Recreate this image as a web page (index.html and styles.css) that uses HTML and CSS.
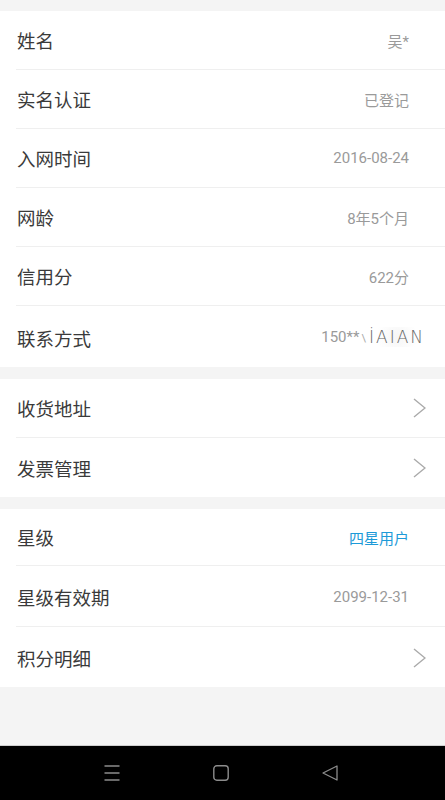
FILE: index.html
```html
<!DOCTYPE html>
<html lang="zh-CN">
<head>
  <meta charset="UTF-8" />
  <title>个人信息</title>
  <link rel="stylesheet" href="styles.css">
</head>
<body>

  <div class="page">
    <div class="group">
      <div class="row"><span class="label">姓名</span><span class="value">吴*</span></div>
      <div class="row"><span class="label">实名认证</span><span class="value">已登记</span></div>
      <div class="row"><span class="label">入网时间</span><span class="value">2016-08-24</span></div>
      <div class="row"><span class="label">网龄</span><span class="value">8年5个月</span></div>
      <div class="row"><span class="label">信用分</span><span class="value">622分</span></div>
      <div class="row row-contact">
        <span class="label">联系方式</span>
        <span class="value contact">150**<span class="slash">\</span><span class="mark">İAIAN</span></span>
      </div>
    </div>

    <div class="group">
      <div class="row row-link"><span class="label">收货地址</span><svg class="arrow" width="13" height="20" viewBox="0 0 13 20"><path d="M1 1L12 10L1 19" /></svg></div>
      <div class="row row-link"><span class="label">发票管理</span><svg class="arrow" width="13" height="20" viewBox="0 0 13 20"><path d="M1 1L12 10L1 19" /></svg></div>
    </div>

    <div class="group">
      <div class="row row-star"><span class="label">星级</span><span class="value blue">四星用户</span></div>
      <div class="row row-expire"><span class="label">星级有效期</span><span class="value">2099-12-31</span></div>
      <div class="row row-link row-last"><span class="label">积分明细</span><svg class="arrow" width="13" height="20" viewBox="0 0 13 20"><path d="M1 1L12 10L1 19" /></svg></div>
    </div>
  </div>

  <div class="navbar">
    <svg width="16" height="16" viewBox="0 0 16 16">
      <path d="M0.5 1H15.5M0.5 8H15.5M0.5 15H15.5" stroke="#8c8c8c" stroke-width="1.4" fill="none" />
    </svg>
    <svg width="16" height="16" viewBox="0 0 16 16">
      <rect x="0.8" y="0.8" width="14.4" height="14.4" rx="3" stroke="#8c8c8c" stroke-width="1.4" fill="none" />
    </svg>
    <svg width="16" height="16" viewBox="0 0 16 16">
      <path d="M15 1V15L1 8Z" stroke="#8c8c8c" stroke-width="1.3" stroke-linejoin="round" fill="none" />
    </svg>
  </div>

</body>
</html>
```

FILE: styles.css
```css
* {
  box-sizing: border-box;
  margin: 0;
  padding: 0;
}

body {
  font-family: "Noto Sans CJK SC", sans-serif;
  background-color: #f4f4f4;
  display: flex;
  flex-direction: column;
  height: 800px;
  width: 445px;
  overflow: hidden;
}

.page {
  flex: 1;
  padding-top: 11px;
}

.group {
  background-color: #ffffff;
  margin-bottom: 12px;
}

.row {
  display: flex;
  align-items: center;
  height: 59px;
  margin-left: 16px;
  padding-left: 1px;
  padding-right: 36px;
  border-bottom: 1px solid #efefef;
}

.row:last-child {
  border-bottom: none;
}

.row-contact {
  height: 61px;
  padding-right: 20px;
  padding-top: 3px;
}

.row-star {
  height: 57px;
}

.row-expire {
  height: 61px;
  padding-top: 2px;
}

.row-link {
  padding-right: 19px;
}

.row-last {
  height: 60px;
  padding-top: 2px;
}

.label {
  flex: 1;
  font-size: 18.5px;
  color: #3a3a3a;
}

.value {
  font-family: Roboto, "Noto Sans CJK SC", sans-serif;
  font-size: 15px;
  color: #9a9a9a;
}

.value.blue {
  color: #1d9ad8;
}

.contact {
  display: flex;
  align-items: center;
  margin-top: -2px;
}

.slash {
  font-size: 11px;
  color: #aaaaaa;
  margin: 2px 3px 0 2px;
}

.mark {
  font-family: "DejaVu Sans", sans-serif;
  font-size: 17px;
  font-weight: 200;
  color: #666666;
  letter-spacing: 2px;
  background: radial-gradient(circle, #f6f6f6 0%, #ffffff 70%);
}

.arrow {
  fill: none;
  stroke: #aaaaaa;
  stroke-width: 1.4;
}

.navbar {
  height: 55px;
  background-color: #000000;
  border-top: 1px solid #cfcfcf;
  display: flex;
  align-items: center;
  justify-content: space-between;
  padding: 0 107px 0 104px;
}
```
